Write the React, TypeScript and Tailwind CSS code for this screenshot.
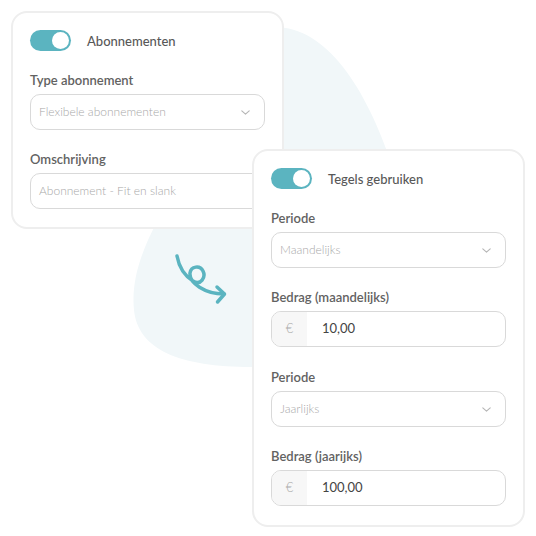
import React from "react";

const font = { fontFamily: "Lato, 'Open Sans', sans-serif" };

function Toggle({ label }: { label: string }) {
  return (
    <div className="flex items-center h-[21px]">
      <div className="relative w-[41px] h-[21px] rounded-full bg-[#5bb4c0]">
        <div className="absolute right-[2px] top-[2px] w-[17px] h-[17px] rounded-full bg-white" />
      </div>
      <span className="ml-[16px] text-[13px] font-medium text-[#585858] leading-4">{label}</span>
    </div>
  );
}

function Label({ children }: { children: React.ReactNode }) {
  return <div className="text-[13px] font-semibold text-[#626262] leading-4 mb-[6px]">{children}</div>;
}

function Chevron() {
  return (
    <svg width="9" height="5" viewBox="0 0 9 5" fill="none">
      <path d="M0.8 0.8 L4.5 4.2 L8.2 0.8" stroke="#b5b5b5" strokeWidth="1.1" strokeLinecap="round" strokeLinejoin="round" />
    </svg>
  );
}

function Select({ placeholder }: { placeholder: string }) {
  return (
    <div className="h-[36px] rounded-[10px] border border-[#d9d9d9] bg-white flex items-center justify-between pl-[8px] pr-[14px]">
      <span className="text-[12px] font-light text-[#a8a8a8]">{placeholder}</span>
      <Chevron />
    </div>
  );
}

function TextInput({ placeholder }: { placeholder: string }) {
  return (
    <div className="h-[36px] rounded-[10px] border border-[#d9d9d9] bg-white flex items-center pl-[8px]">
      <span className="text-[12px] font-light text-[#a8a8a8]">{placeholder}</span>
    </div>
  );
}

function AmountInput({ value }: { value: string }) {
  return (
    <div className="h-[36px] rounded-[10px] border border-[#d9d9d9] bg-white flex items-stretch overflow-hidden">
      <div className="w-[35px] bg-[#f7f7f7] flex items-center justify-center text-[13px] font-light text-[#aaa]">€</div>
      <div className="flex items-center pl-[15px] text-[13px] text-[#444]">{value}</div>
    </div>
  );
}

export default function App() {
  return (
    <div className="relative w-[536px] h-[536px] bg-white overflow-hidden" style={font}>
      <svg className="absolute left-0 top-0" width="536" height="536" viewBox="0 0 536 536" fill="none">
        <path
          d="M272 27 C 325 25, 365 85, 392 165 C 410 230, 400 300, 330 340 C 300 358, 275 367, 252 367 C 180 367, 138 350, 134 310 C 130 270, 150 232, 175 190 C 210 120, 230 30, 272 27 Z"
          fill="#f1f7f9"
        />
        <path
          d="M177 256 C 179 267, 185 276, 193 281 C 201 286, 206 277, 203 271 C 200 265, 191 266, 190 273 C 189 283, 205 294, 224 294"
          stroke="#5bb4c0"
          strokeWidth="3.5"
          strokeLinecap="round"
          fill="none"
        />
        <path d="M217 287 L224.5 294 L217.5 302" stroke="#5bb4c0" strokeWidth="3.5" strokeLinecap="round" strokeLinejoin="round" fill="none" />
      </svg>

      <div className="relative flex flex-col pt-[11px]">
        <div className="ml-[11px] w-[273px] rounded-[16px] border-2 border-[#eeeeee] bg-white p-[17px] pb-[18px] flex flex-col">
          <Toggle label="Abonnementen" />
          <div className="mt-[21px]">
            <Label>Type abonnement</Label>
            <Select placeholder="Flexibele abonnementen" />
          </div>
          <div className="mt-[21px]">
            <Label>Omschrijving</Label>
            <TextInput placeholder="Abonnement - Fit en slank" />
          </div>
        </div>

        <div className="ml-[252px] mt-[-80px] relative w-[273px] rounded-[16px] border-2 border-[#eeeeee] bg-white p-[17px] pb-[19px] flex flex-col">
          <Toggle label="Tegels gebruiken" />
          <div className="mt-[21px]">
            <Label>Periode</Label>
            <Select placeholder="Maandelijks" />
          </div>
          <div className="mt-[21px]">
            <Label>Bedrag (maandelijks)</Label>
            <AmountInput value="10,00" />
          </div>
          <div className="mt-[22px]">
            <Label>Periode</Label>
            <Select placeholder="Jaarlijks" />
          </div>
          <div className="mt-[21px]">
            <Label>Bedrag (jaarijks)</Label>
            <AmountInput value="100,00" />
          </div>
        </div>
      </div>
    </div>
  );
}
